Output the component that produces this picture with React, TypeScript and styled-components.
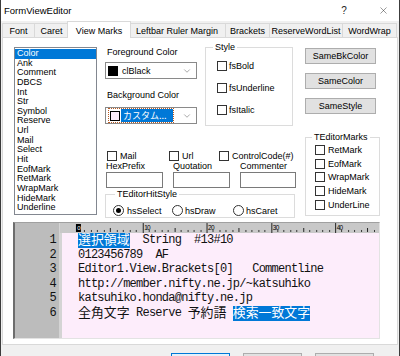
import React from "react";
import styled, { createGlobalStyle } from "styled-components";
import { X, ChevronDown } from "lucide-react";

const GlobalStyle = createGlobalStyle`
  html, body { margin: 0; padding: 0; }
  body {
    width: 400px; height: 356px; overflow: hidden; background: #f0f0f0;
    font-family: "Liberation Sans", Arial, "Noto Sans CJK JP", sans-serif;
    color: #000;
  }
  * { box-sizing: border-box; }
`;

const Window = styled.div`
  width: 400px;
  height: 356px;
  display: flex;
  flex-direction: column;
  border-left: 1px solid #3c3c3c;
  border-right: 1px solid #3c3c3c;
  background: #f0f0f0;
  overflow: hidden;
`;

const TitleBar = styled.div`
  height: 21px;
  flex: 0 0 auto;
  background: #fff;
  display: flex;
  align-items: center;
  padding-left: 3px;
  font-size: 9.5px;
`;

const Title = styled.div`
  flex: 1;
`;

const TitleButton = styled.div<{ $w: number }>`
  width: ${(p) => p.$w}px;
  height: 21px;
  display: flex;
  align-items: center;
  justify-content: center;
  font-size: 10px;
  color: #222;
`;

const Body = styled.div`
  flex: 1;
  display: flex;
  flex-direction: column;
  padding: 0 1px;
`;

const TabStrip = styled.div`
  display: flex;
  align-items: flex-end;
  height: 16px;
  flex: 0 0 auto;
`;

const Tab = styled.div<{ $w: number; $active?: boolean }>`
  flex: 0 0 auto;
  width: ${(p) => p.$w}px;
  height: ${(p) => (p.$active ? 17 : 14)}px;
  margin: ${(p) => (p.$active ? "0 -2px -1px -2px" : "0")};
  padding-top: ${(p) => (p.$active ? 1 : 0)}px;
  position: relative;
  z-index: ${(p) => (p.$active ? 1 : 0)};
  background: ${(p) => (p.$active ? "#fff" : "#f0f0f0")};
  border: 1px solid #d9d9d9;
  border-bottom: none;
  border-left-width: ${(p) => (p.$active ? 1 : 0)}px;
  &:first-child { border-left-width: 1px; }
  display: flex;
  align-items: center;
  justify-content: center;
  font-size: 9px;
  white-space: nowrap;
`;

const Page = styled.div`
  height: 308px;
  flex: 0 0 auto;
  background: #fff;
  border: 1px solid #d9d9d9;
  padding: 4px 16px 5px 10px;
  display: flex;
  flex-direction: column;
`;

const TopSection = styled.div`
  display: flex;
  align-items: flex-start;
  height: 176px;
`;

const ListBox = styled.div`
  width: 83px;
  height: 168px;
  margin: 5px 0 0 1px;
  border: 1px solid #828790;
  background: #fff;
  padding: 1px 0 0 0;
  display: flex;
  flex-direction: column;
`;

const ListItem = styled.div<{ $selected?: boolean }>`
  height: 9.65px;
  line-height: 9.65px;
  font-size: 9px;
  padding-left: 2px;
  background: ${(p) => (p.$selected ? "#0078d7" : "transparent")};
  color: ${(p) => (p.$selected ? "#fff" : "#000")};
  white-space: nowrap;
`;

const MiddleColumn = styled.div`
  width: 191px;
  margin-left: 8px;
  display: flex;
  flex-direction: column;
`;

const RowA = styled.div`
  display: flex;
  align-items: flex-start;
  gap: 8px;
`;

const ColorColumn = styled.div`
  width: 92px;
  padding-top: 5px;
  display: flex;
  flex-direction: column;
`;

const FieldLabel = styled.div<{ $mt?: number }>`
  font-size: 9px;
  line-height: 10px;
  height: 10px;
  padding-left: 2px;
  margin-top: ${(p) => p.$mt ?? 0}px;
  white-space: nowrap;
`;

const Combo = styled.div<{ $mt: number }>`
  margin-top: ${(p) => p.$mt}px;
  height: 17px;
  border: 1px solid #8a8a8a;
  background: #fff;
  display: flex;
  align-items: center;
  padding: 0 4px 0 1px;
  font-size: 9px;
`;

const ComboValue = styled.div`
  flex: 1;
  display: flex;
  align-items: center;
  gap: 4px;
  padding-left: 1px;
`;

const Swatch = styled.span<{ $color: string; $bordered?: boolean }>`
  width: 10px;
  height: 10px;
  flex: 0 0 auto;
  background: ${(p) => p.$color};
  border: ${(p) => (p.$bordered ? "1px solid #000" : "none")};
`;

const FocusBox = styled.div`
  display: flex;
  align-items: center;
  height: 15px;
  width: 66px;
  border: 1px dotted #b85a22;
  padding: 0 0 0 1px;
  gap: 1px;
`;

const SelectedText = styled.span`
  flex: 1;
  height: 13px;
  line-height: 13px;
  background: #0078d7;
  color: #fff;
  padding-left: 2px;
  font-family: "Noto Sans CJK JP", "Liberation Sans", sans-serif;
  font-size: 9px;
  white-space: nowrap;
`;

const Arrow = styled.span`
  display: flex;
  align-items: center;
  color: #606060;
`;

const Group = styled.fieldset<{ $w: number; $pad: string; $mt?: number }>`
  margin: ${(p) => p.$mt ?? 0}px 0 0 0;
  min-width: 0;
  width: ${(p) => p.$w}px;
  border: 1px solid #dcdcdc;
  padding: ${(p) => p.$pad};
`;

const Legend = styled.legend<{ $ml: number }>`
  padding: 0 2px;
  margin-left: ${(p) => p.$ml}px;
  font-size: 9px;
  line-height: 10px;
  height: 10px;
  white-space: nowrap;
`;

const CheckColumn = styled.div<{ $gap: number }>`
  display: flex;
  flex-direction: column;
  gap: ${(p) => p.$gap}px;
`;

const CheckItem = styled.div<{ $w?: number; $h?: number; $gap?: number }>`
  display: flex;
  align-items: center;
  flex: 0 0 auto;
  gap: ${(p) => p.$gap ?? 2}px;
  height: ${(p) => p.$h ?? 11}px;
  width: ${(p) => (p.$w ? `${p.$w}px` : "auto")};
  font-size: 9px;
  white-space: nowrap;
`;

const Box = styled.span`
  width: 10px;
  height: 10px;
  flex: 0 0 auto;
  border: 1px solid #333;
  background: #fff;
`;

const RadioCircle = styled.span<{ $on?: boolean }>`
  width: 11px;
  height: 11px;
  flex: 0 0 auto;
  border-radius: 50%;
  border: 1px solid #333;
  background: #fff;
  display: flex;
  align-items: center;
  justify-content: center;
  &::after {
    content: "";
    width: 5px;
    height: 5px;
    border-radius: 50%;
    background: ${(p) => (p.$on ? "#000" : "transparent")};
  }
`;

const CheckRow = styled.div`
  display: flex;
  height: 10px;
  margin-top: 25px;
  padding-left: 2px;
`;

const EditGrid = styled.div<{ $mt?: number }>`
  display: grid;
  grid-template-columns: 57px 57px 56px;
  column-gap: 10px;
  padding-left: 1px;
  margin-top: ${(p) => p.$mt ?? 0}px;
`;

const SmallLabel = styled.div`
  font-size: 9px;
  line-height: 10px;
  height: 10px;
  white-space: nowrap;
`;

const Edit = styled.div`
  height: 16px;
  border: 1px solid #7a7a7a;
  background: #fff;
`;

const RadioRow = styled.div`
  display: flex;
  height: 11px;
`;

const RightColumn = styled.div`
  width: 75px;
  margin-left: 9px;
  padding-top: 6px;
  display: flex;
  flex-direction: column;
`;

const ButtonStack = styled.div`
  display: flex;
  flex-direction: column;
  gap: 9px;
`;

const PushButton = styled.div`
  width: 71px;
  height: 16px;
  border: 1px solid #adadad;
  background: #e1e1e1;
  font-size: 9px;
  display: flex;
  align-items: center;
  justify-content: center;
  white-space: nowrap;
`;

const Editor = styled.div`
  margin-top: 4px;
  width: 367px;
  height: 117px;
  display: flex;
  border-top: 1px solid #a0a0a0;
  border-left: 2px solid #6d6d6d;
  border-right: 1px solid #e3e3e3;
  border-bottom: 1px solid #e3e3e3;
  font-family: "Liberation Mono", "DejaVu Sans Mono", monospace;
  font-size: 12px;
  letter-spacing: -0.75px;
`;

const Gutter = styled.div`
  width: 47px;
  flex: 0 0 auto;
  background: #bcbcbc;
  border-right: 3px solid #d4d4d4;
  padding: 10px 3px 0 0;
  display: flex;
  flex-direction: column;
  align-items: flex-end;
`;

const Main = styled.div`
  flex: 1;
  background: #fdedfb;
  display: flex;
  flex-direction: column;
  min-width: 0;
`;

const RulerBar = styled.div`
  height: 10px;
  flex: 0 0 auto;
  background: #c8c8c8;
  display: flex;
  margin-left: -2px;
`;

const TextArea = styled.div`
  padding-left: 16px;
  display: flex;
  flex-direction: column;
`;

const Line = styled.div`
  height: 14.6px;
  line-height: 14.6px;
  white-space: pre;
  color: #111;
`;

const Wide = styled.span`
  display: inline-block;
  vertical-align: top;
  height: 14.6px;
  line-height: 12px;
  font-family: "Noto Sans CJK JP", sans-serif;
  font-size: 12.9px;
  letter-spacing: 0;
`;

const Sel = styled.span`
  display: inline-block;
  vertical-align: top;
  height: 14.6px;
  background: #0078d7;
  color: #fff;
`;

const Footer = styled.div`
  flex: 1;
  display: flex;
  gap: 13px;
  padding: 8px 0 0 169px;
`;

const FooterButton = styled.div<{ $default?: boolean }>`
  width: 59px;
  height: 21px;
  border: 1px solid ${(p) => (p.$default ? "#0078d7" : "#adadad")};
  background: ${(p) => (p.$default ? "#e5f1fb" : "#e1e1e1")};
`;

const Ruler: React.FC = () => {
  const step = 6.45;
  const origin = 18;
  const items: React.ReactNode[] = [];
  for (let i = 0; i <= 48; i++) {
    const x = Math.round(origin + i * step) + 0.5;
    if (i === 0) {
      items.push(<rect key="z" x={x - 2.5} y={1} width={5} height={8} fill="#000" />);
      items.push(
        <text key="zt" x={x} y={7.5} fontSize={6} fill="#fff" textAnchor="middle" fontFamily="Liberation Sans, sans-serif">
          0
        </text>
      );
    } else if (i % 10 === 0) {
      items.push(<line key={`l${i}`} x1={x} y1={0} x2={x} y2={10} stroke="#222" strokeWidth={1} />);
      items.push(
        <text key={`t${i}`} x={x + 1} y={7} fontSize={6.5} fill="#000" fontFamily="Liberation Sans, sans-serif">
          {i}
        </text>
      );
    } else if (i % 5 === 0) {
      items.push(<line key={`m${i}`} x1={x} y1={5} x2={x} y2={9} stroke="#222" strokeWidth={1} />);
    } else {
      items.push(<line key={`d${i}`} x1={x} y1={7} x2={x} y2={9} stroke="#333" strokeWidth={1} />);
    }
  }
  return (
    <svg width="320" height="10" viewBox="0 0 320 10">
      {items}
    </svg>
  );
};

const listItems = [
  "Color", "Ank", "Comment", "DBCS", "Int", "Str", "Symbol", "Reserve", "Url",
  "Mail", "Select", "Hit", "EofMark", "RetMark", "WrapMark", "HideMark", "Underline",
];

const tabs: { label: string; w: number; active?: boolean }[] = [
  { label: "Font", w: 33 },
  { label: "Caret", w: 34 },
  { label: "View Marks", w: 64, active: true },
  { label: "Leftbar Ruler Margin", w: 97 },
  { label: "Brackets", w: 44 },
  { label: "ReserveWordList", w: 73 },
  { label: "WordWrap", w: 54 },
];

const marks = ["RetMark", "EofMark", "WrapMark", "HideMark", "UnderLine"];

export default function App() {
  return (
    <>
      <GlobalStyle />
      <Window>
        <TitleBar>
          <Title>FormViewEditor</Title>
          <TitleButton $w={46}>?</TitleButton>
          <TitleButton $w={32}>
            <X size={11} strokeWidth={1} />
          </TitleButton>
        </TitleBar>
        <Body>
          <TabStrip>
            {tabs.map((t) => (
              <Tab key={t.label} $w={t.w} $active={t.active}>
                {t.label}
              </Tab>
            ))}
          </TabStrip>
          <Page>
            <TopSection>
              <ListBox>
                {listItems.map((it, i) => (
                  <ListItem key={it} $selected={i === 0}>
                    {it}
                  </ListItem>
                ))}
              </ListBox>
              <MiddleColumn>
                <RowA>
                  <ColorColumn>
                    <FieldLabel>Foreground Color</FieldLabel>
                    <Combo $mt={5}>
                      <ComboValue>
                        <Swatch $color="#000" />
                        <span>clBlack</span>
                      </ComboValue>
                      <Arrow>
                        <ChevronDown size={10} strokeWidth={1.3} />
                      </Arrow>
                    </Combo>
                    <FieldLabel $mt={11}>Background Color</FieldLabel>
                    <Combo $mt={7}>
                      <ComboValue>
                        <FocusBox>
                          <Swatch $color="#fdedfb" $bordered />
                          <SelectedText>カスタム...</SelectedText>
                        </FocusBox>
                      </ComboValue>
                      <Arrow>
                        <ChevronDown size={10} strokeWidth={1.3} />
                      </Arrow>
                    </Combo>
                  </ColorColumn>
                  <Group $w={88} $pad="8px 0 10px 11px">
                    <Legend $ml={-4}>Style</Legend>
                    <CheckColumn $gap={11}>
                      <CheckItem><Box />fsBold</CheckItem>
                      <CheckItem><Box />fsUnderline</CheckItem>
                      <CheckItem><Box />fsItalic</CheckItem>
                    </CheckColumn>
                  </Group>
                </RowA>
                <CheckRow>
                  <CheckItem $w={62} $h={10} $gap={3}><Box />Mail</CheckItem>
                  <CheckItem $w={50} $h={10} $gap={3}><Box />Url</CheckItem>
                  <CheckItem $h={10} $gap={3}><Box />ControlCode(#)</CheckItem>
                </CheckRow>
                <EditGrid>
                  <SmallLabel>HexPrefix</SmallLabel>
                  <SmallLabel>Quotation</SmallLabel>
                  <SmallLabel>Commenter</SmallLabel>
                </EditGrid>
                <EditGrid $mt={1}>
                  <Edit />
                  <Edit />
                  <Edit />
                </EditGrid>
                <Group $w={190} $mt={1} $pad="6px 0 1px 7px">
                  <Legend $ml={2}>TEditorHitStyle</Legend>
                  <RadioRow>
                    <CheckItem $w={59} $gap={3}><RadioCircle $on />hsSelect</CheckItem>
                    <CheckItem $w={61} $gap={2}><RadioCircle />hsDraw</CheckItem>
                    <CheckItem $gap={2}><RadioCircle />hsCaret</CheckItem>
                  </RadioRow>
                </Group>
              </MiddleColumn>
              <RightColumn>
                <ButtonStack>
                  <PushButton>SameBkColor</PushButton>
                  <PushButton>SameColor</PushButton>
                  <PushButton>SameStyle</PushButton>
                </ButtonStack>
                <Group $w={75} $mt={18} $pad="1px 0 3px 9px">
                  <Legend $ml={-3}>TEditorMarks</Legend>
                  <CheckColumn $gap={0}>
                    {marks.map((m) => (
                      <CheckItem key={m} $h={13.75} $gap={3}>
                        <Box />
                        {m}
                      </CheckItem>
                    ))}
                  </CheckColumn>
                </Group>
              </RightColumn>
            </TopSection>
            <Editor>
              <Gutter>
                {[1, 2, 3, 4, 5, 6].map((n) => (
                  <Line key={n}>{n}</Line>
                ))}
              </Gutter>
              <Main>
                <RulerBar>
                  <Ruler />
                </RulerBar>
                <TextArea>
                  <Line>
                    <Sel><Wide>選択領域</Wide></Sel>
                    {"  String  #13#10"}
                  </Line>
                  <Line>{"0123456789  AF"}</Line>
                  <Line>{"Editor1.View.Brackets[0]   Commentline"}</Line>
                  <Line>{"http://member.nifty.ne.jp/~katsuhiko"}</Line>
                  <Line>{"katsuhiko.honda@nifty.ne.jp"}</Line>
                  <Line>
                    <Wide>全角文字</Wide>
                    {" Reserve "}
                    <Wide>予約語</Wide>
                    {" "}
                    <Sel><Wide>検索一致文字</Wide></Sel>
                  </Line>
                </TextArea>
              </Main>
            </Editor>
          </Page>
          <Footer>
            <FooterButton $default />
            <FooterButton />
            <FooterButton />
          </Footer>
        </Body>
      </Window>
    </>
  );
}
